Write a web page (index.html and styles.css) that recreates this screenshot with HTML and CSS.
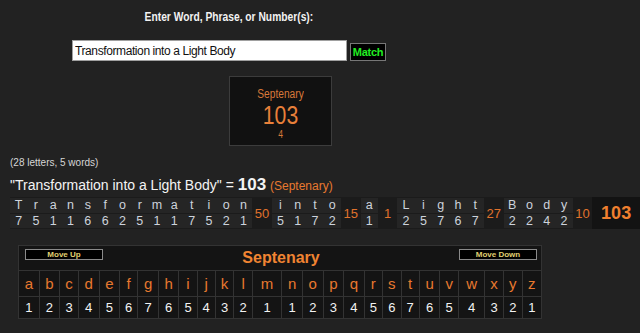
FILE: index.html
```html
<!DOCTYPE html>
<html lang="en">
<head>
    <meta charset="UTF-8">
    <meta name="viewport" content="width=device-width, initial-scale=1.0">
    <title>Gematria</title>
    <link rel="stylesheet" href="styles.css">
</head>
<body>
    <div class="search">
        <h1 class="prompt"><span>Enter Word, Phrase, or Number(s):</span></h1>
        <div class="form-row">
            <input class="phrase" type="text" value="Transformation into a Light Body">
            <button class="match">Match</button>
        </div>
    </div>

    <div class="result-box">
        <div class="cipher">Septenary</div>
        <div class="value">103</div>
        <div class="reduced">4</div>
    </div>

    <p class="counts">(28 letters, 5 words)</p>
    <p class="summary">"Transformation into a Light Body" = <b>103</b> <span class="cipher-name">(Septenary)</span></p>

    <div class="breakdown">
        <div class="col"><span>T</span><span>7</span></div>
        <div class="col"><span>r</span><span>5</span></div>
        <div class="col"><span>a</span><span>1</span></div>
        <div class="col"><span>n</span><span>1</span></div>
        <div class="col"><span>s</span><span>6</span></div>
        <div class="col"><span>f</span><span>6</span></div>
        <div class="col"><span>o</span><span>2</span></div>
        <div class="col"><span>r</span><span>5</span></div>
        <div class="col"><span>m</span><span>1</span></div>
        <div class="col"><span>a</span><span>1</span></div>
        <div class="col"><span>t</span><span>7</span></div>
        <div class="col"><span>i</span><span>5</span></div>
        <div class="col"><span>o</span><span>2</span></div>
        <div class="col"><span>n</span><span>1</span></div>
        <div class="word-sum">50</div>
        <div class="col"><span>i</span><span>5</span></div>
        <div class="col"><span>n</span><span>1</span></div>
        <div class="col"><span>t</span><span>7</span></div>
        <div class="col"><span>o</span><span>2</span></div>
        <div class="word-sum">15</div>
        <div class="col"><span>a</span><span>1</span></div>
        <div class="word-sum">1</div>
        <div class="col"><span>L</span><span>2</span></div>
        <div class="col"><span>i</span><span>5</span></div>
        <div class="col"><span>g</span><span>7</span></div>
        <div class="col"><span>h</span><span>6</span></div>
        <div class="col"><span>t</span><span>7</span></div>
        <div class="word-sum">27</div>
        <div class="col"><span>B</span><span>2</span></div>
        <div class="col"><span>o</span><span>2</span></div>
        <div class="col"><span>d</span><span>4</span></div>
        <div class="col"><span>y</span><span>2</span></div>
        <div class="word-sum">10</div>
        <div class="grand-sum">103</div>
    </div>

    <table class="cipher-table">
        <tr class="head">
            <td colspan="26">
                <div class="head-row">
                    <button class="move">Move Up</button>
                    <span class="table-title">Septenary</span>
                    <button class="move">Move Down</button>
                </div>
            </td>
        </tr>
        <tr class="letters">
            <td>a</td><td>b</td><td>c</td><td>d</td><td>e</td><td>f</td><td>g</td><td>h</td><td>i</td><td>j</td><td>k</td><td>l</td><td>m</td>
            <td>n</td><td>o</td><td>p</td><td>q</td><td>r</td><td>s</td><td>t</td><td>u</td><td>v</td><td>w</td><td>x</td><td>y</td><td>z</td>
        </tr>
        <tr class="numbers">
            <td>1</td><td>2</td><td>3</td><td>4</td><td>5</td><td>6</td><td>7</td><td>6</td><td>5</td><td>4</td><td>3</td><td>2</td><td>1</td>
            <td>1</td><td>2</td><td>3</td><td>4</td><td>5</td><td>6</td><td>7</td><td>6</td><td>5</td><td>4</td><td>3</td><td>2</td><td>1</td>
        </tr>
    </table>
</body>
</html>
```

FILE: styles.css
```css
*{
    margin: 0;
    padding: 0;
    box-sizing: border-box;
}
body{
    background-color: #222222;
    font-family: "Liberation Sans", Arial, sans-serif;
    color: #ffffff;
}
.search{
    width: 458px;
    padding-top: 9px;
    text-align: center;
}
.prompt{
    font-size: 13.5px;
    line-height: 16px;
    font-weight: bold;
    color: #f2f2f2;
}
/* the original uses a narrow face, squeeze it */
.prompt span{
    display: inline-block;
    transform: scaleX(0.76);
}
.form-row{
    display: flex;
    align-items: flex-end;
    gap: 3px;
    margin: 15px 0 0 72px;
}
.phrase{
    width: 275px;
    height: 21px;
    padding: 0 2px;
    border: 1px solid #a0a0a0;
    background-color: #ffffff;
    color: #111111;
    font-family: "Liberation Sans", Arial, sans-serif;
    font-size: 12px;
    letter-spacing: -0.4px;
    outline: none;
}
.match{
    width: 36px;
    height: 18px;
    background-color: #000000;
    border: 1px solid #777777;
    color: #22ee22;
    font-family: "Liberation Sans", Arial, sans-serif;
    font-weight: bold;
    font-size: 11px;
    letter-spacing: -0.3px;
}
.result-box{
    width: 103px;
    height: 70px;
    margin: 15px 0 0 229px;
    padding-top: 9px;
    background-color: #111111;
    border: 1px solid #3c3c3c;
    text-align: center;
    color: #e8803a;
}
.result-box div{
    transform: scaleX(0.85);
}
.cipher{
    font-size: 12px;
    line-height: 16px;
    color: #d8793a;
}
.value{
    font-size: 25px;
    line-height: 27px;
}
.reduced{
    font-size: 10px;
    line-height: 11px;
    color: #d8793a;
}
.counts{
    margin: 11px 0 0 10px;
    font-size: 10px;
    line-height: 12px;
    color: #d6d6d6;
}
.summary{
    margin: 6px 0 0 10px;
    font-size: 14px;
    line-height: 20px;
    color: #f4f4f4;
}
.summary b{
    font-size: 17px;
}
.cipher-name{
    font-size: 12px;
    color: #e8792f;
}
.breakdown{
    display: flex;
    margin: 1px 0 0 10px;
    height: 32px;
    background-color: #1b1b1b;
}
.col{
    width: 17.3px;
    display: flex;
    flex-direction: column;
    gap: 1px;
    padding: 1px 0;
}
.col span{
    flex: 1;
    background-color: #252525;
    color: #cdd3dc;
    font-size: 12.5px;
    line-height: 14px;
    text-align: center;
}
.word-sum{
    width: 19.6px;
    display: flex;
    align-items: center;
    justify-content: center;
    color: #e0722c;
    font-size: 13px;
}
.grand-sum{
    flex: 1;
    display: flex;
    align-items: center;
    justify-content: center;
    background-color: #131313;
    color: #f0802f;
    font-size: 18px;
    font-weight: bold;
}
.cipher-table{
    width: 524px;
    margin: 16px 0 0 18px;
    border-collapse: collapse;
    background-color: #141414;
    border: 1px solid #353535;
}
.cipher-table td{
    border: 1px solid #333333;
    text-align: center;
}
.head td{
    height: 25px;
    padding: 0 4px 0 6px;
}
.head-row{
    display: flex;
    justify-content: space-between;
    align-items: center;
}
.move{
    width: 78px;
    height: 11px;
    background-color: #000000;
    border: 1px solid #8a8a8a;
    color: #e0d070;
    font-family: "Liberation Sans", Arial, sans-serif;
    font-weight: bold;
    font-size: 8px;
    line-height: 9px;
    margin-top: -8px;
}
.table-title{
    color: #f08432;
    font-size: 16px;
    font-weight: bold;
}
.letters td{
    height: 26px;
    color: #e8792f;
    font-size: 15px;
}
.numbers td{
    height: 22px;
    color: #f2f2f2;
    font-size: 13px;
}
```
